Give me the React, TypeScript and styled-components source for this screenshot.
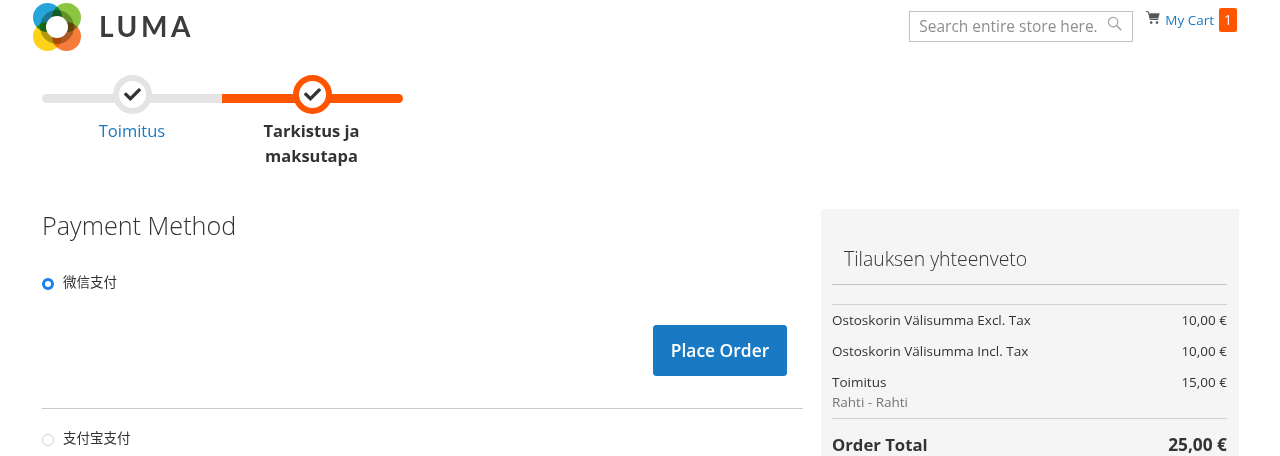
import React from 'react';
import styled, { createGlobalStyle } from 'styled-components';
import { FaCheck } from 'react-icons/fa';

const GlobalStyle = createGlobalStyle`
  html, body {
    margin: 0;
    background: #fff;
    font-family: "Open Sans", "Noto Sans CJK SC", sans-serif;
    color: #333;
  }
  * { box-sizing: border-box; }
`;

const Logo = () => (
  <LogoSvg viewBox="0 0 48 48" aria-hidden="true">
    <circle cx="14.5" cy="14.5" r="14.5" fill="#25a5dc" />
    <circle cx="33.5" cy="14.5" r="14.5" fill="#8cc63f" style={{ mixBlendMode: 'multiply' }} />
    <circle cx="14.5" cy="33.5" r="14.5" fill="#fdd319" style={{ mixBlendMode: 'multiply' }} />
    <circle cx="33.5" cy="33.5" r="14.5" fill="#f47b3a" style={{ mixBlendMode: 'multiply' }} />
    <circle cx="24" cy="24" r="17" fill="#b4b8a4" style={{ mixBlendMode: 'multiply' }} />
    <circle cx="24" cy="24" r="11" fill="#fff" />
  </LogoSvg>
);

const SearchIcon = () => (
  <svg width="15" height="15" viewBox="0 0 16 16" fill="none" stroke="#a3a3a3" strokeWidth="1.3" aria-hidden="true">
    <circle cx="6.5" cy="6.5" r="5" />
    <path d="M10.2 10.2l5 5" strokeWidth="1.7" />
  </svg>
);

const CartIcon = () => (
  <svg width="14" height="14" viewBox="0 0 14 14" fill="none" stroke="#555" aria-hidden="true">
    <path d="M0 .6h2.3l2 7.9h8" strokeWidth="1" />
    <path d="M3 2.4h10.4l-1.2 4.8H4.2z" fill="#555" strokeWidth="0.4" />
    <circle cx="5.2" cy="11.6" r="1.3" fill="#555" strokeWidth="0" />
    <circle cx="11" cy="11.6" r="1.3" fill="#555" strokeWidth="0" />
  </svg>
);

const App = () => (
  <Page>
    <GlobalStyle />
    <Header>
      <Brand>
        <Logo />
        <BrandName>LUMA</BrandName>
      </Brand>
      <HeaderTools>
        <SearchBox>
          <SearchText>Search entire store here.</SearchText>
          <SearchIcon />
        </SearchBox>
        <Cart>
          <CartIcon />
          <CartLabel>My Cart</CartLabel>
          <CartCount>1</CartCount>
        </Cart>
      </HeaderTools>
    </Header>

    <Progress>
      <Step>
        <StepCircle>
          <FaCheck size={17} color="#333" />
        </StepCircle>
        <StepLabel>Toimitus</StepLabel>
      </Step>
      <Step $active>
        <StepCircle $active>
          <FaCheck size={17} color="#333" />
        </StepCircle>
        <StepLabel $active>Tarkistus ja maksutapa</StepLabel>
      </Step>
    </Progress>

    <Main>
      <section>
        <PaymentTitle>Payment Method</PaymentTitle>
        <MethodRow>
          <Radio $checked />
          <MethodName>微信支付</MethodName>
        </MethodRow>
        <Actions>
          <PlaceOrder>Place Order</PlaceOrder>
        </Actions>
        <Divider />
        <MethodRow>
          <Radio />
          <MethodName>支付宝支付</MethodName>
        </MethodRow>
      </section>

      <Summary>
        <SummaryTitle>Tilauksen yhteenveto</SummaryTitle>
        <Totals>
          <TotalRow>
            <span>Ostoskorin Välisumma Excl. Tax</span>
            <span>10,00 €</span>
          </TotalRow>
          <TotalRow>
            <span>Ostoskorin Välisumma Incl. Tax</span>
            <span>10,00 €</span>
          </TotalRow>
          <TotalRow>
            <span>
              Toimitus
              <ShippingNote>Rahti - Rahti</ShippingNote>
            </span>
            <span>15,00 €</span>
          </TotalRow>
        </Totals>
        <GrandTotal>
          <span>Order Total</span>
          <GrandAmount>25,00 €</GrandAmount>
        </GrandTotal>
      </Summary>
    </Main>
  </Page>
);

export default App;

const Page = styled.div`
  height: 456px;
  overflow: hidden;
`;

const Header = styled.header`
  display: flex;
  justify-content: space-between;
  height: 75px;
  padding: 3px 43px 0 33px;
`;

const Brand = styled.div`
  display: flex;
  align-items: flex-start;
  gap: 18px;
`;

const LogoSvg = styled.svg`
  width: 48px;
  height: 48px;
`;

const BrandName = styled.span`
  margin-top: 5px;
  font-family: "Lato", sans-serif;
  font-size: 28px;
  font-weight: 700;
  line-height: 36px;
  letter-spacing: 3.6px;
  color: #3c3c3c;
`;

const HeaderTools = styled.div`
  display: flex;
  align-items: flex-start;
  gap: 13px;
`;

const SearchBox = styled.div`
  display: flex;
  align-items: flex-start;
  justify-content: space-between;
  width: 224px;
  height: 31px;
  margin-top: 8px;
  padding: 4px 10px 0 9px;
  border: 1px solid #c2c2c2;
`;

const SearchText = styled.span`
  font-size: 15.5px;
  line-height: 20px;
  color: #8f8f8f;
`;

const Cart = styled.div`
  display: flex;
  align-items: flex-start;
  margin-top: 3px;

  svg {
    margin-top: 5px;
  }
`;

const CartLabel = styled.span`
  margin: 4px 5px 0 5px;
  font-size: 13.5px;
  font-weight: 500;
  line-height: 20px;
  color: #1979c3;
`;

const CartCount = styled.span`
  width: 18px;
  height: 24px;
  margin-top: 2px;
  border-radius: 2px;
  background: #ff5501;
  color: #fff;
  font-size: 14px;
  line-height: 24px;
  text-align: center;
`;

const Progress = styled.div`
  display: flex;
  width: 361px;
  height: 134px;
  margin-left: 42px;
`;

const Step = styled.div<{ $active?: boolean }>`
  position: relative;
  display: flex;
  flex-direction: column;
  align-items: center;
  width: ${(p) => (p.$active ? '181px' : '180px')};

  &::before {
    content: "";
    position: absolute;
    top: 19px;
    left: 0;
    right: 0;
    height: 9px;
    background: ${(p) => (p.$active ? '#ff5501' : '#e4e4e4')};
    border-radius: ${(p) => (p.$active ? '0 5px 5px 0' : '5px 0 0 5px')};
  }
`;

const StepCircle = styled.div<{ $active?: boolean }>`
  position: relative;
  display: flex;
  align-items: center;
  justify-content: center;
  width: 39px;
  height: 39px;
  border: 6px solid ${(p) => (p.$active ? '#ff5501' : '#e4e4e4')};
  border-radius: 50%;
  background: #fff;
`;

const StepLabel = styled.span<{ $active?: boolean }>`
  width: 120px;
  margin-top: 4px;
  margin-right: ${(p) => (p.$active ? '2px' : '0')};
  font-size: 16.5px;
  font-weight: ${(p) => (p.$active ? 700 : 400)};
  line-height: 25px;
  text-align: center;
  color: ${(p) => (p.$active ? '#333' : '#1979c3')};
`;

const Main = styled.main`
  display: grid;
  grid-template-columns: 761px 418px;
  column-gap: 18px;
  padding-left: 42px;
`;

const PaymentTitle = styled.h2`
  margin: 0;
  height: 65px;
  font-size: 25.2px;
  font-weight: 300;
  line-height: 32px;
`;

const MethodRow = styled.div`
  display: flex;
  align-items: center;
  gap: 9px;
  height: 18px;
`;

const Radio = styled.span<{ $checked?: boolean }>`
  width: 12px;
  height: 12px;
  margin-top: 2px;
  border-radius: 50%;
  background: #fff;
  border: ${(p) => (p.$checked ? '3.5px solid #1a7ff0' : '1px solid #cfcfcf')};
`;

const MethodName = styled.span`
  margin-top: -2px;
  font-size: 13.5px;
  line-height: 18px;
  color: #333;
`;

const Actions = styled.div`
  display: flex;
  justify-content: flex-end;
  padding: 33px 16px 32px 0;
`;

const PlaceOrder = styled.button`
  width: 134px;
  height: 51px;
  padding: 0 0 2px;
  border: 1px solid #1979c3;
  border-radius: 3px;
  background: #1979c3;
  color: #fff;
  font-family: inherit;
  font-size: 17.4px;
  font-weight: 600;
`;

const Divider = styled.hr`
  height: 1px;
  margin: 0 0 21px;
  border: 0;
  background: #c9c9c9;
`;

const Summary = styled.aside`
  height: 247px;
  overflow: hidden;
  padding: 34px 12px 0 11px;
  background: #f5f5f5;
`;

const SummaryTitle = styled.h3`
  margin: 0;
  height: 42px;
  padding-left: 12px;
  border-bottom: 1px solid #c2c2c2;
  font-size: 19.4px;
  font-weight: 300;
  line-height: 32px;
`;

const Totals = styled.div`
  display: flex;
  flex-direction: column;
  gap: 11px;
  margin-top: 19px;
  padding: 5px 0 6px;
  border-top: 1px solid #d1d1d1;
  border-bottom: 1px solid #d1d1d1;
`;

const TotalRow = styled.div`
  display: flex;
  justify-content: space-between;
  font-size: 13.5px;
  line-height: 20px;
`;

const ShippingNote = styled.div`
  font-size: 13.5px;
  color: #757575;
`;

const GrandTotal = styled.div`
  display: flex;
  justify-content: space-between;
  margin-top: 12px;
  font-size: 16.7px;
  font-weight: 700;
  line-height: 28px;
`;

const GrandAmount = styled.span`
  font-size: 17.3px;
`;
